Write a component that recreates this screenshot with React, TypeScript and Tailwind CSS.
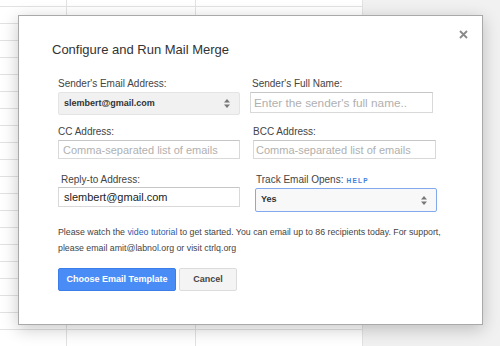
const font = { fontFamily: '"Liberation Sans", Arial, sans-serif' };

const rows = Array.from({ length: 20 }, (_, i) => i);

const Arrows = () => (
  <svg width="6" height="9" viewBox="0 0 6 9" className="shrink-0">
    <path d="M0 3.5 L3 0 L6 3.5 Z" fill="#777" />
    <path d="M0 5.5 L3 9 L6 5.5 Z" fill="#777" />
  </svg>
);

const Label = ({ children }: { children: React.ReactNode }) => (
  <div className="text-[10px] leading-[12px] text-[#444] whitespace-nowrap">{children}</div>
);

export default function App() {
  return (
    <div className="relative w-[500px] h-[346px] overflow-hidden bg-white" style={font}>
      {/* sheet behind the dialog */}
      <div className="flex h-full">
        <div className="flex flex-col w-[363px]">
          <div className="flex h-[7px] border-b border-[#e2e2e2] shrink-0">
            <div className="w-[67px] border-r border-[#e2e2e2]" />
            <div className="w-[129px] border-r border-[#e2e2e2]" />
            <div className="w-[167px] border-r border-[#e2e2e2]" />
          </div>
          {rows.map((r) => (
            <div key={r} className="flex h-[17px] border-b border-[#e2e2e2] shrink-0">
              <div className="w-[67px] border-r border-[#e2e2e2]" />
              <div className="w-[129px] border-r border-[#e2e2e2]" />
              <div className="w-[167px] border-r border-[#e2e2e2]" />
            </div>
          ))}
        </div>
        <div className="flex-1 bg-[#f1f1f1]" />
      </div>

      {/* dialog */}
      <div className="absolute left-[18px] top-[15px] w-[465px] h-[310px] bg-white border border-[#a9a9a9] shadow-[0_4px_16px_rgba(0,0,0,0.22)]">
        <svg width="9" height="9" viewBox="0 0 9 9" className="absolute right-[14px] top-[14px]">
          <path d="M1 1 L8 8 M8 1 L1 8" stroke="#8a8a8a" strokeWidth="1.8" />
        </svg>

        <div className="pt-[26px] pl-[33px] text-[13px] leading-[16px] text-[#333]">
          Configure and Run Mail Merge
        </div>

        <div className="pl-[39px] mt-[20px] flex flex-col">
          {/* row 1 */}
          <div className="grid grid-cols-[182px_184px] gap-x-[12px] items-start">
            <div className="flex flex-col">
              <Label>Sender's Email Address:</Label>
              <div className="mt-[2px] h-[23px] flex items-center justify-between pl-[5px] pr-[9px] bg-[#f1f1f1] border border-[#e4e4e4] rounded-[2px] text-[9px] font-bold text-[#333]">
                <span>slembert@gmail.com</span>
                <Arrows />
              </div>
            </div>
            <div className="flex flex-col">
              <Label>Sender's Full Name:</Label>
              <input
                readOnly
                placeholder="Enter the sender's full name.."
                className="mt-[2px] -ml-[2px] h-[21px] w-[183px] pl-[3px] border border-[#d9d9d9] border-t-[#c6c6c6] text-[11.8px] outline-none placeholder:text-[#b0b0b0]"
                style={font}
              />
            </div>
          </div>

          {/* row 2 */}
          <div className="mt-[11px] grid grid-cols-[182px_184px] gap-x-[12px] items-start">
            <div className="flex flex-col">
              <Label>CC Address:</Label>
              <input
                readOnly
                placeholder="Comma-separated list of emails"
                className="mt-[2px] h-[19px] w-[182px] pl-[4px] border border-[#d9d9d9] border-t-[#c6c6c6] text-[11px] outline-none placeholder:text-[#b0b0b0]"
                style={font}
              />
            </div>
            <div className="flex flex-col pl-[1px]">
              <Label>BCC Address:</Label>
              <input
                readOnly
                placeholder="Comma-separated list of emails"
                className="mt-[2px] h-[19px] w-[183px] pl-[2px] border border-[#d9d9d9] border-t-[#c6c6c6] text-[11px] outline-none placeholder:text-[#b0b0b0]"
                style={font}
              />
            </div>
          </div>

          {/* row 3 */}
          <div className="mt-[15px] grid grid-cols-[182px_184px] gap-x-[12px] items-start">
            <div className="flex flex-col">
              <div className="pl-[3px]">
                <Label>Reply-to Address:</Label>
              </div>
              <input
                readOnly
                defaultValue="slembert@gmail.com"
                className="mt-[1px] h-[20px] w-[182px] pl-[5px] border border-[#d9d9d9] border-t-[#c6c6c6] text-[11px] text-[#222] outline-none"
                style={font}
              />
            </div>
            <div className="flex flex-col pl-[3px]">
              <div className="flex items-baseline gap-[3px] pl-[1px]">
                <Label>Track Email Opens:</Label>
                <span className="text-[6.5px] font-bold tracking-[1.3px] text-[#3f7de0]">HELP</span>
              </div>
              <div className="mt-[2px] h-[24px] w-[182px] flex items-center justify-between pl-[5px] pr-[9px] bg-[#f8f8f8] border border-[#82a9ee] rounded-[2px] text-[9px] font-bold text-[#333]">
                <span>Yes</span>
                <Arrows />
              </div>
            </div>
          </div>

          {/* help text */}
          <p className="mt-[12px] text-[8.8px] leading-[16px] text-[#444] whitespace-nowrap">
            Please watch the <span className="text-[#2a5db0]">video tutorial</span> to get started. You can email up to 86 recipients today. For support,
            <br />
            please email amit@labnol.org or visit ctrlq.org
          </p>

          {/* buttons */}
          <div className="mt-[12px] flex gap-[3px]">
            <button className="h-[23px] w-[118px] bg-[#4a8cf6] border border-[#3b7de9] rounded-[2px] text-white text-[9px] font-bold" style={font}>
              Choose Email Template
            </button>
            <button className="h-[23px] w-[58px] bg-[#f4f4f4] border border-[#dcdcdc] rounded-[2px] text-[#444] text-[9px] font-bold" style={font}>
              Cancel
            </button>
          </div>
        </div>
      </div>
    </div>
  );
}
